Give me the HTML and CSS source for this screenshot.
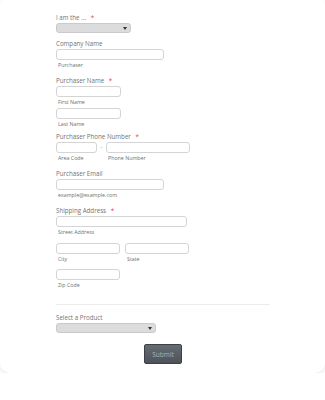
FILE: index.html
```html
<!DOCTYPE html>
<html lang="en">
<head>
    <meta charset="UTF-8">
    <meta name="viewport" content="width=device-width, initial-scale=1.0">
    <title>Order Form</title>
    <link rel="stylesheet" href="styles.css">
</head>
<body>
    <div class="card">
        <div class="field f-role">
            <div class="label">I am the ... <span class="req">*</span></div>
            <div class="select select-role"><span class="arrow"></span></div>
        </div>

        <div class="field f-company">
            <div class="label">Company Name</div>
            <div class="input w-wide"></div>
            <div class="sublabel">Purchaser</div>
        </div>

        <div class="field f-name">
            <div class="label">Purchaser Name <span class="req">*</span></div>
            <div class="input w-half"></div>
            <div class="sublabel">First Name</div>
            <div class="input w-half second"></div>
            <div class="sublabel">Last Name</div>
        </div>

        <div class="field f-phone">
            <div class="label">Purchaser Phone Number <span class="req">*</span></div>
            <div class="phone-row">
                <div class="phone-part">
                    <div class="input w-area"></div>
                    <div class="sublabel">Area Code</div>
                </div>
                <span class="dash">-</span>
                <div class="phone-part">
                    <div class="input w-phone"></div>
                    <div class="sublabel">Phone Number</div>
                </div>
            </div>
        </div>

        <div class="field f-email">
            <div class="label">Purchaser Email</div>
            <div class="input w-wide"></div>
            <div class="sublabel">example@example.com</div>
        </div>

        <div class="field f-address">
            <div class="label">Shipping Address <span class="req">*</span></div>
            <div class="input w-street"></div>
            <div class="sublabel">Street Address</div>
            <div class="address-row">
                <div>
                    <div class="input w-city"></div>
                    <div class="sublabel">City</div>
                </div>
                <div>
                    <div class="input w-state"></div>
                    <div class="sublabel">State</div>
                </div>
            </div>
            <div class="zip">
                <div class="input w-city"></div>
                <div class="sublabel">Zip Code</div>
            </div>
        </div>

        <div class="divider"></div>

        <div class="field f-product">
            <div class="label">Select a Product</div>
            <div class="select select-product"><span class="arrow"></span></div>
        </div>

        <div class="actions">
            <button class="submit">Submit</button>
        </div>
    </div>
</body>
</html>
```

FILE: styles.css
```css
body {
    margin: 0;
    background-color: #ffffff;
    font-family: "Open Sans", Arial, sans-serif;
}
.card {
    margin-top: -4px;
    width: 325px;
    height: 377px;
    box-sizing: border-box;
    padding: 17px 0 0 56px;
    background-color: #ffffff;
    border-radius: 10px;
    box-shadow: 0 2px 5px rgba(0, 0, 0, 0.09);
}
.label {
    font-size: 6.2px;
    line-height: 9px;
    height: 9px;
    color: #737373;
    margin-bottom: 1px;
}
.req {
    color: #e5484d;
    margin-left: 3px;
}
.sublabel {
    font-size: 5.3px;
    line-height: 9px;
    height: 9px;
    color: #6f6f6f;
    margin: 1px 0 0 2px;
}
.input {
    height: 11px;
    box-sizing: border-box;
    border: 1px solid #d4d4d4;
    border-radius: 3px;
    background-color: #ffffff;
}
.select {
    height: 10px;
    box-sizing: border-box;
    border: 1px solid #cacaca;
    border-radius: 3px;
    background-color: #dcdcdc;
    display: flex;
    justify-content: flex-end;
    align-items: center;
    padding-right: 3px;
}
.arrow {
    width: 0;
    height: 0;
    border-left: 2px solid transparent;
    border-right: 2px solid transparent;
    border-top: 3px solid #333;
}
.select-role {
    width: 75px;
}
.select-product {
    width: 100px;
}
.w-wide {
    width: 108px;
}
.w-half {
    width: 65px;
}
.w-area {
    width: 41px;
}
.w-phone {
    width: 84px;
}
.w-street {
    width: 131px;
}
.w-city {
    width: 64px;
}
.w-state {
    width: 64px;
}
.second {
    margin-top: 1px;
}
.f-role {
    margin-bottom: 6px;
}
.f-company {
    margin-bottom: 6px;
}
.f-name {
    margin-bottom: 3px;
}
.f-phone {
    margin-bottom: 6px;
}
.f-email {
    margin-bottom: 6px;
}
.phone-row {
    display: flex;
    align-items: flex-start;
}
.dash {
    width: 9px;
    text-align: center;
    font-size: 6px;
    line-height: 11px;
    color: #777;
}
.address-row {
    display: flex;
    gap: 5px;
    margin-top: 6px;
}
.zip {
    margin-top: 5px;
}
.divider {
    width: 214px;
    height: 1px;
    background-color: #ececec;
    margin: 14px 0 8px;
}
.actions {
    width: 214px;
    display: flex;
    justify-content: center;
    margin-top: 11px;
}
.submit {
    width: 38px;
    height: 20px;
    padding: 0;
    border: 1px solid #3c4147;
    border-radius: 2px;
    background: linear-gradient(#666c73, #4e5359);
    color: #aeb2b7;
    font-family: "Open Sans", Arial, sans-serif;
    font-size: 6.5px;
}
```
